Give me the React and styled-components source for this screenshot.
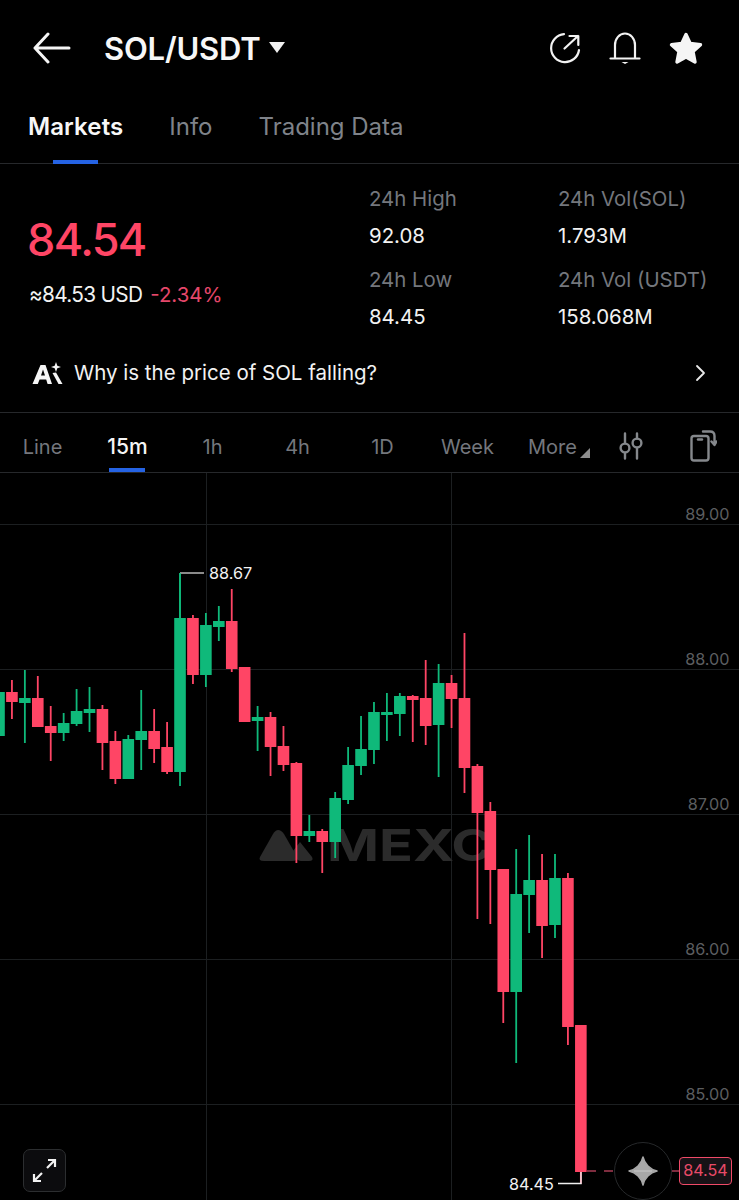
import React from 'react';
import styled, { createGlobalStyle } from 'styled-components';

const GlobalStyle = createGlobalStyle`
  html, body {
    margin: 0;
    background: #000;
  }
  body {
    font-family: 'Inter', 'Liberation Sans', sans-serif;
  }
`

const UP = '#0fb97a'
const DOWN = '#ff4565'

const Page = styled.div`
  width: 739px;
  height: 1200px;
  background: #000;
  color: #f5f5f5;
  display: flex;
  flex-direction: column;
  overflow: hidden;
`
const TopBar = styled.div`
  height: 96px;
  flex: none;
  display: flex;
  align-items: center;
  padding: 0 36px 0 33px;
`
const BackBtn = styled.svg`
  width: 38px;
  height: 32px;
  margin-right: 33px;
`
const Pair = styled.div`
  font-size: 31px;
  font-weight: 600;
  letter-spacing: -0.2px;
  color: #f7f7f7;
  margin-right: 8px;
`
const Caret = styled.div`
  width: 0;
  height: 0;
  border-left: 8px solid transparent;
  border-right: 8px solid transparent;
  border-top: 11px solid #f0f0f0;
  margin-top: -2px;
`
const TopIcons = styled.div`
  margin-left: auto;
  display: flex;
  align-items: center;
  gap: 28px;
`
const TabBar = styled.div`
  height: 67px;
  flex: none;
  display: flex;
  gap: 46px;
  padding-left: 28px;
  border-bottom: 1px solid #26282b;
  box-sizing: content-box;
`
const Tab = styled.div`
  position: relative;
  font-size: 24px;
  line-height: 62px;
  font-weight: ${p => (p.$active ? 600 : 400)};
  color: ${p => (p.$active ? '#f7f7f7' : '#7f838a')};
  letter-spacing: ${p => (p.$active ? '0.1px' : '0')};
  ${p => p.$active && `
    &::after {
      content: '';
      position: absolute;
      left: 25px;
      bottom: -1px;
      width: 45px;
      height: 4px;
      background: #2563e4;
    }
  `}
`
const Stats = styled.div`
  height: 178px;
  flex: none;
  display: grid;
  grid-template-columns: 341px 189px 1fr;
  padding: 20px 0 0 28px;
  box-sizing: border-box;
`
const PriceBox = styled.div`
  display: flex;
  flex-direction: column;
  padding-top: 29px;
`
const BigPrice = styled.div`
  font-size: 45px;
  line-height: 54px;
  font-weight: 500;
  color: ${DOWN};
  letter-spacing: -1.6px;
  margin-left: -1px;
`
const SubPrice = styled.div`
  display: flex;
  gap: 8px;
  line-height: 28px;
  margin-top: 14px;
  margin-left: 1px;
`
const Usd = styled.span`
  font-size: 20.8px;
  color: #f2f2f2;
  letter-spacing: -0.7px;
`
const Change = styled.span`
  font-size: 20.4px;
  color: #e5476a;
`
const StatColumn = styled.div`
  display: flex;
  flex-direction: column;
`
const StatLabel = styled.div`
  font-size: 20.4px;
  line-height: 30px;
  color: #74777d;
  margin-bottom: 7px;
`
const StatValue = styled.div`
  font-size: 20.4px;
  line-height: 30px;
  color: #f2f2f2;
  margin-bottom: 14px;
`
const AskRow = styled.div`
  height: 63px;
  flex: none;
  display: flex;
  align-items: center;
  padding: 0 32px 8px;
  gap: 11px;
  font-size: 20.5px;
  color: #f2f2f2;
  border-bottom: 1px solid #26282b;
  box-sizing: content-box;
  margin-top: -1px;
`
const Chevron = styled.svg`
  width: 14px;
  height: 20px;
  margin-left: auto;
`
const Intervals = styled.div`
  height: 59px;
  flex: none;
  display: flex;
  align-items: center;
  border-bottom: 1px solid #26282b;
`
const Interval = styled.div`
  position: relative;
  width: 85px;
  height: 59px;
  line-height: 68px;
  flex: none;
  text-align: center;
  font-size: ${p => (p.$active ? '21px' : '20px')};
  font-weight: ${p => (p.$active ? 500 : 400)};
  color: ${p => (p.$active ? '#f5f5f5' : '#74777d')};
  ${p => p.$active && `
    &::after {
      content: '';
      position: absolute;
      left: 24px;
      bottom: 0;
      width: 36px;
      height: 4px;
      background: #2563e4;
    }
  `}
`
const MoreCorner = styled.span`
  position: absolute;
  right: 5px;
  top: 35px;
  width: 0;
  height: 0;
  border-left: 10px solid transparent;
  border-bottom: 10px solid #8d8d8d;
`
const ToolIcons = styled.div`
  display: flex;
  align-items: center;
  gap: 47px;
  margin-left: 24px;
  padding-top: 6px;
`
const ChartArea = styled.div`
  position: relative;
  flex: 1;
  overflow: hidden;
`
const ChartSvg = styled.svg`
  display: block;
  width: 739px;
  height: 727px;
`
const AxisLabel = styled.text`
  font-family: 'Inter', 'Liberation Sans', sans-serif;
  font-size: 16.2px;
  fill: #5c5e60;
  text-anchor: end;
`
const MarkLabel = styled.text`
  font-family: 'Inter', 'Liberation Sans', sans-serif;
  font-size: 16.2px;
  fill: #f2f2f2;
`
const Watermark = styled.text`
  font-family: 'Inter', 'Liberation Sans', sans-serif;
  font-size: 44px;
  font-weight: 700;
  fill: #2b2b2b;
`
const ExpandBtn = styled.div`
  position: absolute;
  left: 23px;
  bottom: 8px;
  width: 43px;
  height: 43px;
  box-sizing: border-box;
  border: 1.5px solid #2c2e30;
  border-radius: 7px;
  background: #0c0c0e;
  display: flex;
  align-items: center;
  justify-content: center;
`
const AiBubble = styled.div`
  position: absolute;
  left: 614px;
  bottom: 0;
  width: 58px;
  height: 58px;
  box-sizing: border-box;
  border: 1px solid #26282a;
  border-radius: 50%;
  background: #000;
  display: flex;
  align-items: center;
  justify-content: center;
`
const PriceTag = styled.div`
  position: absolute;
  left: 679px;
  bottom: 15px;
  width: 53px;
  height: 28px;
  box-sizing: border-box;
  border: 1.8px solid #f04a68;
  border-radius: 4px;
  background: #171216;
  color: #e84a68;
  font-size: 16.2px;
  line-height: 25px;
  text-align: center;
`

// [body top, body bottom, wick top, wick bottom, up?]  y in page pixels
const candles = [
  [692, 736, 688, 740, 1],
  [692, 702, 680, 719, 0],
  [698, 703, 670, 743, 1],
  [698, 727, 676, 727, 0],
  [726, 733, 706, 761, 0],
  [723, 733, 713, 741, 1],
  [711, 724, 689, 726, 1],
  [709, 713, 687, 732, 1],
  [709, 743, 705, 770, 0],
  [741, 779, 731, 784, 0],
  [739, 779, 735, 779, 1],
  [731, 740, 690, 770, 1],
  [731, 749, 709, 763, 0],
  [747, 772, 722, 774, 0],
  [618, 772, 573, 786, 1],
  [618, 675, 615, 684, 0],
  [625, 675, 613, 687, 1],
  [621, 627, 606, 641, 1],
  [621, 669, 589, 672, 0],
  [667, 722, 667, 722, 0],
  [717, 721, 706, 751, 1],
  [717, 747, 712, 776, 0],
  [746, 765, 726, 771, 0],
  [763, 836, 762, 863, 0],
  [831, 836, 815, 842, 1],
  [831, 842, 829, 873, 0],
  [798, 842, 792, 858, 1],
  [765, 800, 747, 804, 1],
  [749, 766, 716, 775, 1],
  [712, 750, 702, 764, 1],
  [712, 715, 693, 741, 1],
  [696, 714, 693, 736, 1],
  [696, 700, 695, 742, 0],
  [698, 726, 660, 745, 0],
  [683, 725, 664, 777, 1],
  [683, 699, 675, 728, 0],
  [698, 768, 633, 793, 0],
  [766, 813, 764, 919, 0],
  [811, 870, 802, 924, 0],
  [869, 992, 869, 1023, 0],
  [894, 992, 849, 1063, 1],
  [880, 895, 835, 933, 1],
  [880, 926, 854, 958, 0],
  [878, 925, 854, 938, 1],
  [878, 1027, 873, 1045, 0],
  [1025, 1172, 1025, 1184, 0],
]

const gridLines = [524, 669, 814, 959, 1104]
const axisLabels = ['89.00', '88.00', '87.00', '86.00', '85.00']

const candleX = i => -1 + 12.93 * i

const Chart = () => (
  <ChartSvg viewBox="0 473 739 727">
    {gridLines.map(y => (
      <line key={y} x1="0" x2="739" y1={y + 0.5} y2={y + 0.5} stroke="#1c1f21" strokeWidth="1" />
    ))}
    <line x1="206.5" x2="206.5" y1="473" y2="1200" stroke="#1c1f21" />
    <line x1="451.5" x2="451.5" y1="473" y2="1200" stroke="#1c1f21" />

    <path d="M260 857 L273 834 Q278 826 284 834 L296 855 Q299 861 292 861 H264 Q258 861 260 857 Z" fill="#2b2b2b" />
    <path d="M300 842 L312 857 Q314 861 309 861 H301 Q297 861 296 857 L293 851 Z" fill="#2b2b2b" />
    <Watermark transform="translate(327 861) scale(1.27 1)">MEXC</Watermark>

    {candles.map(([top, bottom, wickTop, wickBottom, up], i) => {
      const x = candleX(i)
      const color = up ? UP : DOWN
      return (
        <g key={i} fill={color}>
          <rect x={x - 0.9} y={wickTop} width="1.8" height={wickBottom - wickTop} />
          <rect x={x - 5.8} y={top} width="11.6" height={bottom - top} />
        </g>
      )
    })}

    {axisLabels.map((label, i) => (
      <AxisLabel key={label} x="729.5" y={gridLines[i] - 4}>{label}</AxisLabel>
    ))}

    <path d="M180 573 H204" fill="none" stroke="#e8e8e8" strokeWidth="1.2" />
    <line x1="180" x2="180" y1="618" y2="573" stroke={UP} strokeWidth="1.6" />
    <MarkLabel x="209" y="579">88.67</MarkLabel>

    <path d="M558 1183.5 H581 V1172" fill="none" stroke="#f0f0f0" strokeWidth="1.4" />
    <MarkLabel x="509" y="1190">84.45</MarkLabel>

    <line x1="587" x2="679" y1="1171" y2="1171" stroke="#a83c54" strokeWidth="1.4" strokeDasharray="9 8" />
  </ChartSvg>
)

const App = () => (
  <Page>
    <GlobalStyle />
    <TopBar>
      <BackBtn viewBox="0 0 38 32" fill="none" stroke="#f5f5f5" strokeWidth="3" strokeLinecap="round" strokeLinejoin="round">
        <path d="M36 16 H2 M15 2 L2 16 L15 30" />
      </BackBtn>
      <Pair>SOL/USDT</Pair>
      <Caret />
      <TopIcons>
        <svg width="32" height="32" viewBox="0 0 32 32" fill="none" stroke="#f2f2f2" strokeWidth="2.2" strokeLinecap="round" strokeLinejoin="round">
          <path d="M15 2.2 A14 14 0 1 0 30 18" />
          <path d="M15.5 16.5 L29 4 M20.5 4 H29.3 V13" />
        </svg>
        <svg width="32" height="34" viewBox="0 0 32 34" fill="none" stroke="#f2f2f2" strokeWidth="2.2" strokeLinecap="round" strokeLinejoin="round">
          <path d="M6 27 V14 A10 11.5 0 0 1 26 14 V27" />
          <path d="M1.5 27.5 H30.5" />
          <path d="M12.5 31 H19.5 L16 33 Z" fill="#f2f2f2" stroke="none" />
        </svg>
        <svg width="34" height="33" viewBox="0 0 34 33" fill="#f5f5f5" stroke="#f5f5f5" strokeWidth="3.4" strokeLinejoin="round">
          <path d="M17 2.5 L21.2 11.5 L31.5 12.8 L24 19.6 L26 30 L17 25 L8 30 L10 19.6 L2.5 12.8 L12.8 11.5 Z" />
        </svg>
      </TopIcons>
    </TopBar>

    <TabBar>
      <Tab $active>Markets</Tab>
      <Tab>Info</Tab>
      <Tab>Trading Data</Tab>
    </TabBar>

    <Stats>
      <PriceBox>
        <BigPrice>84.54</BigPrice>
        <SubPrice>
          <Usd>≈84.53 USD</Usd>
          <Change>-2.34%</Change>
        </SubPrice>
      </PriceBox>
      <StatColumn>
        <StatLabel>24h High</StatLabel>
        <StatValue>92.08</StatValue>
        <StatLabel>24h Low</StatLabel>
        <StatValue>84.45</StatValue>
      </StatColumn>
      <StatColumn>
        <StatLabel>24h Vol(SOL)</StatLabel>
        <StatValue>1.793M</StatValue>
        <StatLabel>24h Vol (USDT)</StatLabel>
        <StatValue>158.068M</StatValue>
      </StatColumn>
    </Stats>

    <AskRow>
      <svg width="31" height="24" viewBox="0 0 31 24" fill="#f5f5f5">
        <path d="M8.5 4 H13.5 L20 23 H15.6 L14.2 18.5 H7.6 L5.8 23 H0.5 Z M9 14.5 H13 L11 8.5 Z" fillRule="evenodd" />
        <path d="M24 1 L25.3 4.7 L29 6 L25.3 7.3 L24 11 L22.7 7.3 L19 6 L22.7 4.7 Z" />
        <path d="M20.5 12 L24 11.5 L30.5 23 H26.5 Z" />
      </svg>
      Why is the price of SOL falling?
      <Chevron viewBox="0 0 14 20" fill="none" stroke="#e8e8e8" strokeWidth="1.8" strokeLinecap="round" strokeLinejoin="round">
        <path d="M4 3 L11 10 L4 17" />
      </Chevron>
    </AskRow>

    <Intervals>
      <Interval>Line</Interval>
      <Interval $active>15m</Interval>
      <Interval>1h</Interval>
      <Interval>4h</Interval>
      <Interval>1D</Interval>
      <Interval>Week</Interval>
      <Interval>More<MoreCorner /></Interval>
      <ToolIcons>
        <svg width="24" height="28" viewBox="0 0 24 28" fill="none" stroke="#85888c" strokeWidth="2.4" strokeLinecap="round">
          <path d="M6 1.5 V11 M6 21 V26.5 M18 1.5 V6.5 M18 16 V26.5" />
          <circle cx="6" cy="16" r="4.4" />
          <circle cx="18" cy="11" r="4.4" />
        </svg>
        <svg width="27" height="32" viewBox="0 0 27 32" fill="none" stroke="#85888c" strokeWidth="2.4" strokeLinecap="round" strokeLinejoin="round">
          <rect x="1.5" y="6" width="17" height="24.5" rx="2.5" />
          <path d="M8 9.5 H12" />
          <path d="M13 1.5 H20 Q24.5 1.5 24.5 6 V14 M21.5 11.5 L24.5 15 L26.5 11.5" />
        </svg>
      </ToolIcons>
    </Intervals>

    <ChartArea>
      <Chart />
      <ExpandBtn>
        <svg width="25" height="25" viewBox="0 0 25 25" fill="none" stroke="#f2f2f2" strokeWidth="2.2">
          <path d="M15 10 L23 2 M16 2 H23 V9" />
          <path d="M10 15 L2 23 M2 16 V23 H9" />
        </svg>
      </ExpandBtn>
      <AiBubble>
        <svg width="30" height="30" viewBox="0 0 30 30">
          <path d="M15 1 C16.5 8 22 13.5 29 15 C22 16.5 16.5 22 15 29 C13.5 22 8 16.5 1 15 C8 13.5 13.5 8 15 1 Z" fill="#a8a8a8" stroke="#a8a8a8" strokeWidth="1.5" strokeLinejoin="round" />
          <path d="M6 15 H24" stroke="#c9c9c9" strokeWidth="1" />
        </svg>
      </AiBubble>
      <PriceTag>84.54</PriceTag>
    </ChartArea>
  </Page>
)

export default App
